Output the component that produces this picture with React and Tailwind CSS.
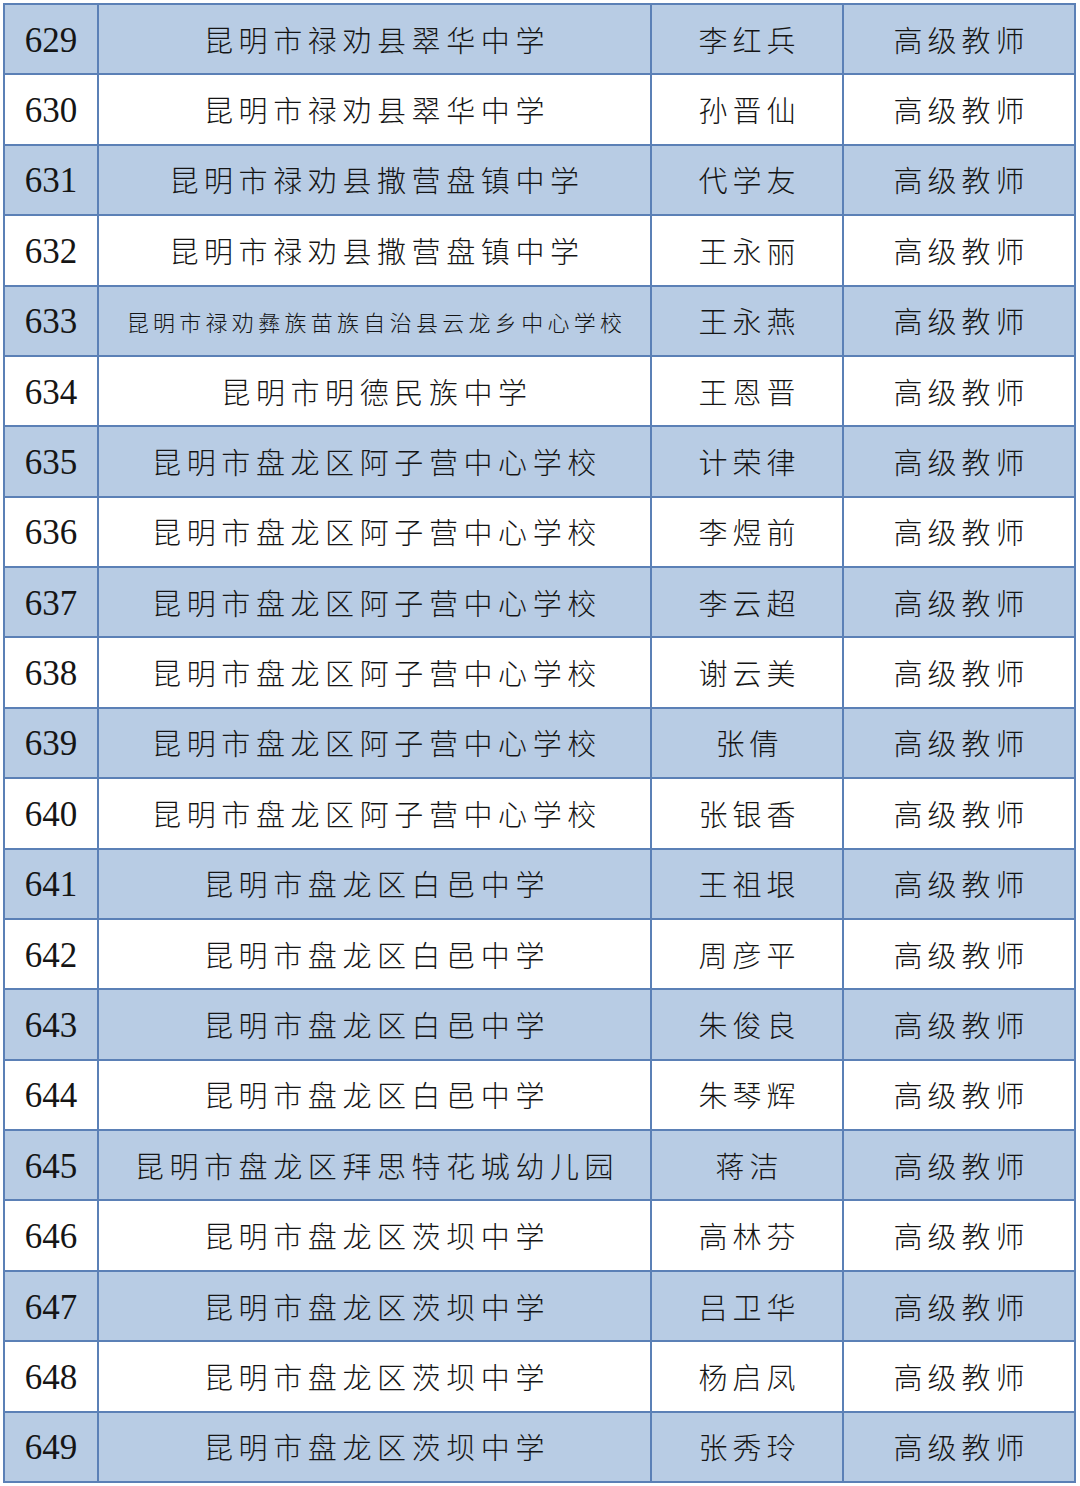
import React from "react";

const rows = [
  [629, "昆明市禄劝县翠华中学", "李红兵"],
  [630, "昆明市禄劝县翠华中学", "孙晋仙"],
  [631, "昆明市禄劝县撒营盘镇中学", "代学友"],
  [632, "昆明市禄劝县撒营盘镇中学", "王永丽"],
  [633, "昆明市禄劝彝族苗族自治县云龙乡中心学校", "王永燕"],
  [634, "昆明市明德民族中学", "王恩晋"],
  [635, "昆明市盘龙区阿子营中心学校", "计荣律"],
  [636, "昆明市盘龙区阿子营中心学校", "李煜前"],
  [637, "昆明市盘龙区阿子营中心学校", "李云超"],
  [638, "昆明市盘龙区阿子营中心学校", "谢云美"],
  [639, "昆明市盘龙区阿子营中心学校", "张倩"],
  [640, "昆明市盘龙区阿子营中心学校", "张银香"],
  [641, "昆明市盘龙区白邑中学", "王祖垠"],
  [642, "昆明市盘龙区白邑中学", "周彦平"],
  [643, "昆明市盘龙区白邑中学", "朱俊良"],
  [644, "昆明市盘龙区白邑中学", "朱琴辉"],
  [645, "昆明市盘龙区拜思特花城幼儿园", "蒋洁"],
  [646, "昆明市盘龙区茨坝中学", "高林芬"],
  [647, "昆明市盘龙区茨坝中学", "吕卫华"],
  [648, "昆明市盘龙区茨坝中学", "杨启凤"],
  [649, "昆明市盘龙区茨坝中学", "张秀玲"],
];

export default function App() {
  return (
    <div className="w-[1080px] h-[1486px] bg-white pt-[3px] pl-[3px]">
      <div className="w-[1073px] h-[1480px] bg-[#5b80b6] p-[2px] grid grid-cols-[92px_551px_190px_230px] grid-rows-[repeat(21,minmax(0,1fr))] gap-[2px] text-[#151515] font-['Noto_Sans_CJK_SC',sans-serif] font-light">
        {rows.map(([n, school, name]) => {
          const bg = n % 2 === 1 ? "bg-[#b8cce4]" : "bg-white";
          const small = school.length > 16;
          return (
            <React.Fragment key={n}>
              <div className={`${bg} flex items-center justify-center pt-[2px] text-[35px] leading-none font-normal font-['Liberation_Serif',serif]`}>
                {n}
              </div>
              <div
                className={`${bg} flex items-center justify-center leading-none ${
                  small ? "text-[22px] tracking-[4.3px] pl-[4px]" : "text-[29px] tracking-[5.6px] pl-[5px]"
                }`}
              >
                {school}
              </div>
              <div className={`${bg} flex items-center justify-center text-[29px] tracking-[5px] pl-[5px] leading-none`}>
                {name}
              </div>
              <div className={`${bg} flex items-center justify-center text-[29px] tracking-[5px] pl-[5px] leading-none`}>
                高级教师
              </div>
            </React.Fragment>
          );
        })}
      </div>
    </div>
  );
}
